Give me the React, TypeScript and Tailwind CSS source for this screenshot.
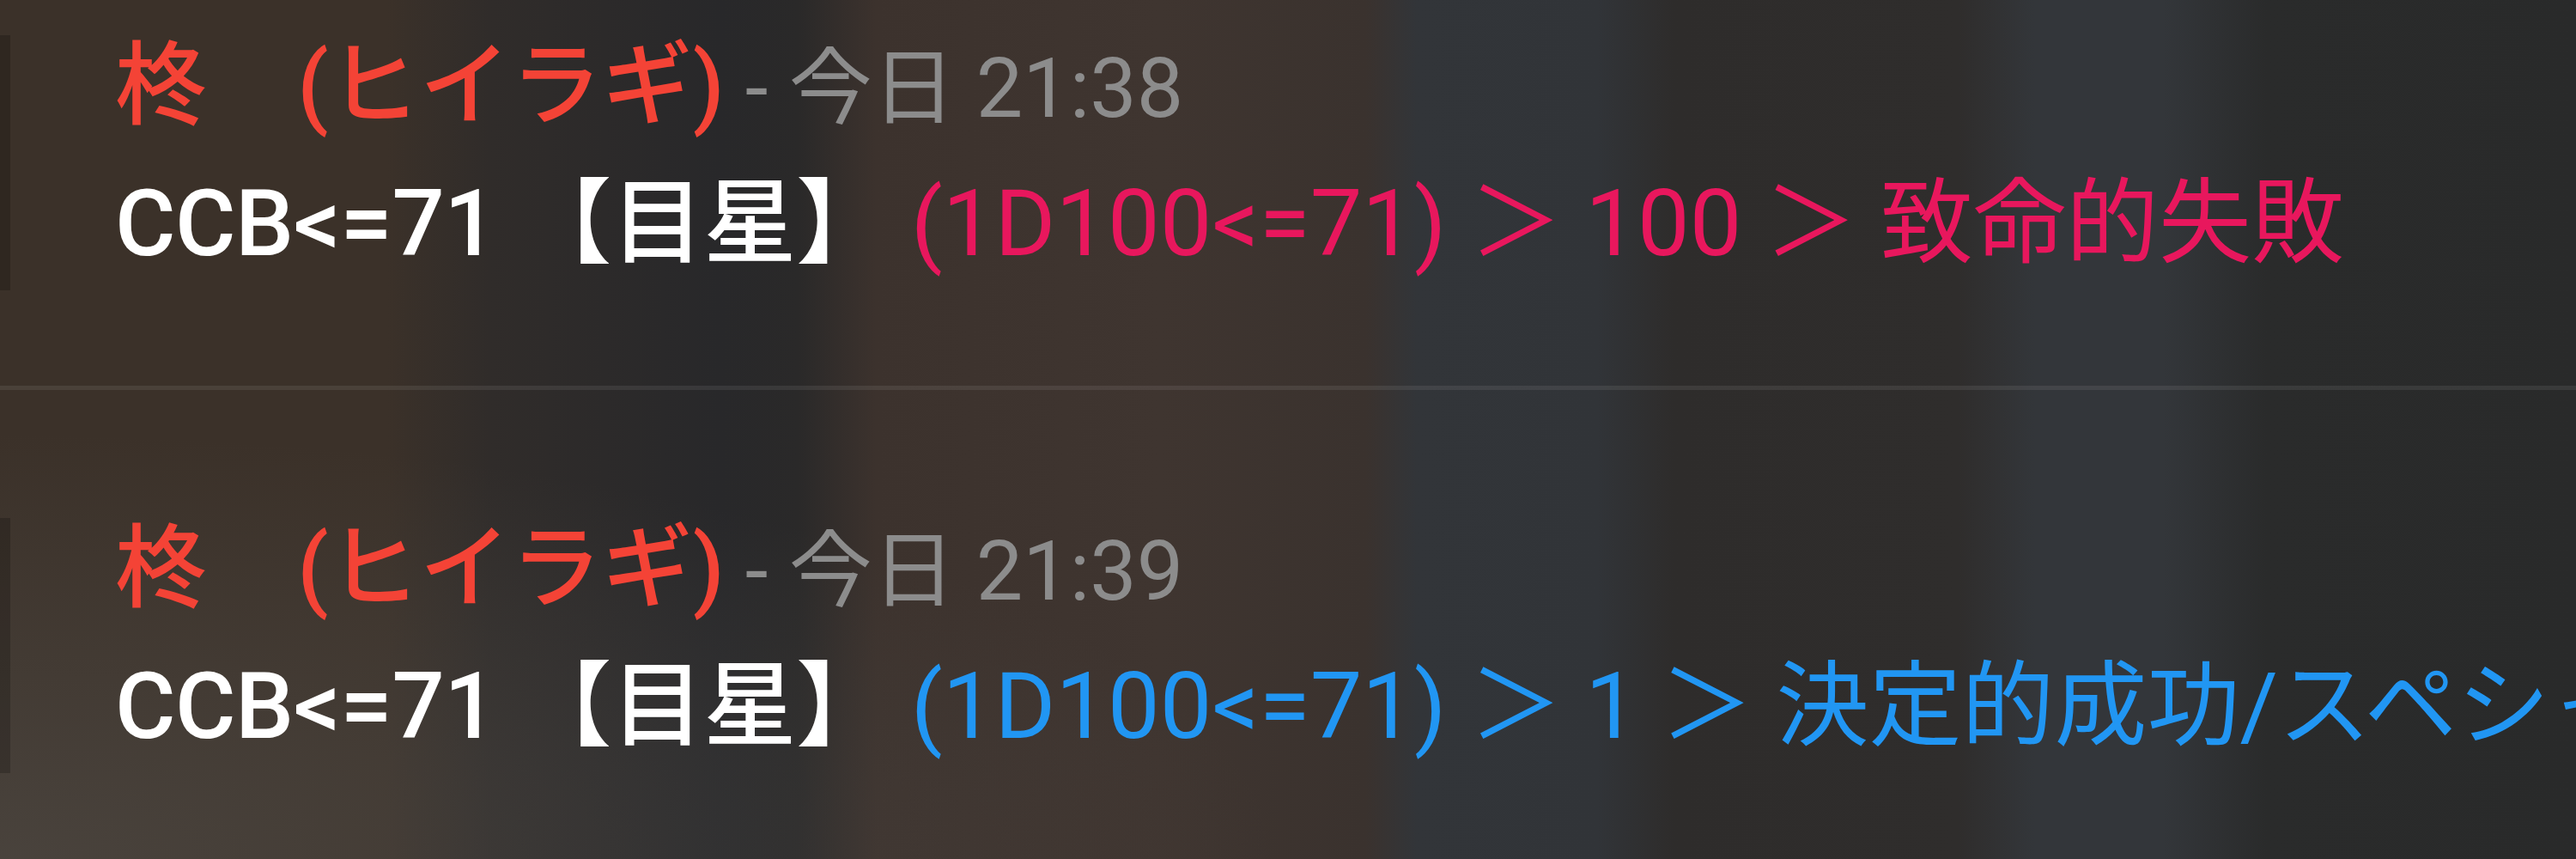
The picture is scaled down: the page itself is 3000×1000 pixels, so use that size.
type Roll = {
  time: string;
  color: string;
  result: string;
};

const rolls: Roll[] = [
  { time: "21:38", color: "text-[#e8175d]", result: "(1D100<=71) ＞ 100 ＞ 致命的失敗" },
  { time: "21:39", color: "text-[#2196f3]", result: "(1D100<=71) ＞ 1 ＞ 決定的成功/スペシャル" },
];

function Message({ roll }: { roll: Roll }) {
  return (
    <div className="flex h-[297px]">
      <div className="w-3 shrink-0 bg-black/20" />
      <div className="pl-[122px] whitespace-nowrap">
        <div className="text-[106px] leading-[119px] font-medium text-[#f44336]">
          柊　(ヒイラギ)
          <span className="text-[97px] leading-[100px] font-normal text-[#8c8c8c]">
            {" - 今日 "}
            {roll.time}
          </span>
        </div>
        <div className="mt-[35px] text-[108px] leading-[130px]">
          <span className="font-medium tracking-[-0.5px] text-white">{"CCB<=71 【目星】 "}</span>
          <span className={roll.color}>{roll.result}</span>
        </div>
      </div>
    </div>
  );
}

export default function App() {
  return (
    <div className="relative w-[3000px] h-[1000px] overflow-hidden font-['Roboto','Noto_Sans_CJK_JP',sans-serif] bg-[linear-gradient(90deg,#3b3129_0%,#3b3129_15%,#302c2a_19%,#28282a_28%,#2a2929_31%,#3c322d_34%,#3f3530_45%,#3a322e_53%,#323539_55%,#313438_62%,#2e2c2b_65%,#2f2d2c_76%,#33363a_79%,#33363a_84%,#2a2b2b_88%,#292a2a_100%)]">
      <div className="absolute inset-0 bg-[radial-gradient(ellipse_at_0%_100%,rgba(90,88,84,0.45),transparent_35%)]" />
      <div className="relative pt-[41px]">
        <Message roll={rolls[0]} />
        <div className="mt-[111px] mb-[149px] h-[5px] bg-white/[0.08]" />
        <Message roll={rolls[1]} />
      </div>
    </div>
  );
}
